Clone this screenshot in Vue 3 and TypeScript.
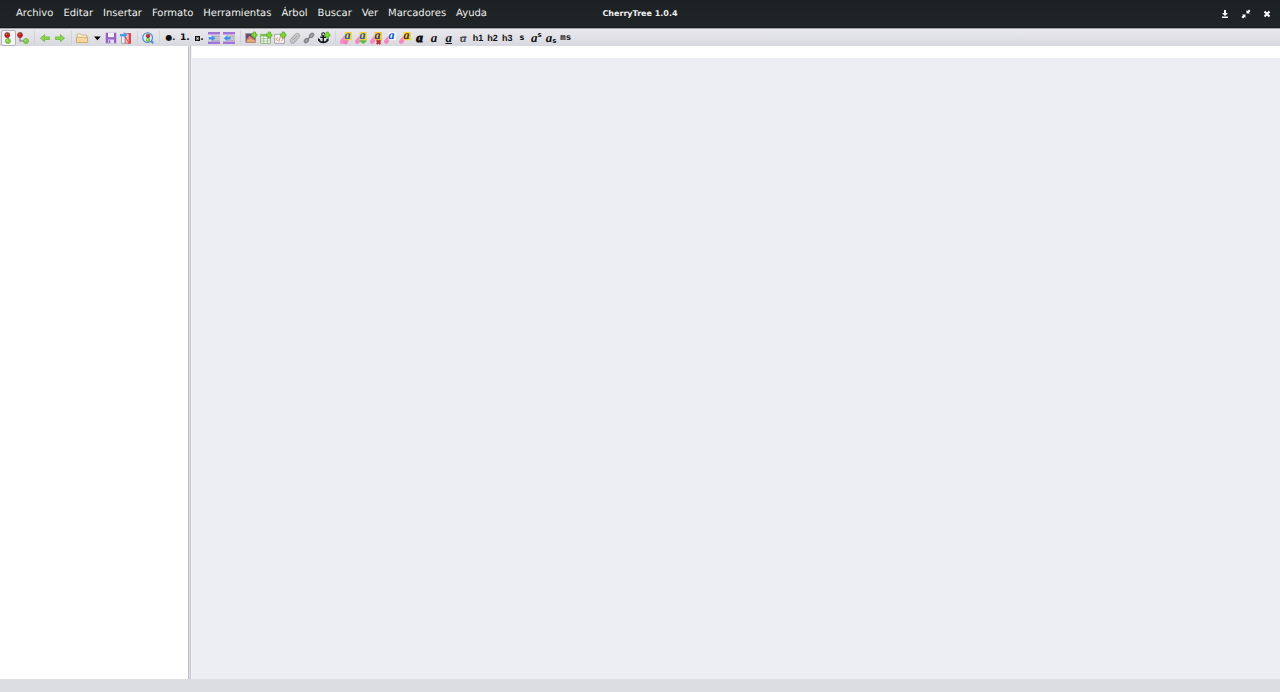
<script setup lang="ts">
interface Tool {
  label: string
  art?: string
  text?: string
  look?: string
  sub?: string
  active?: boolean
}
interface Group {
  name: string
  tools: Tool[]
}

const menus: string[] = ['Archivo', 'Editar', 'Insertar', 'Formato', 'Herramientas', 'Árbol', 'Buscar', 'Ver', 'Marcadores', 'Ayuda']

const plus = '<path d="M11 0h3v2.500h2v3h-2V8h-3V5.500H8.500v-3H11z" fill="#7ddb35" stroke="#4ba51a" stroke-width=".8"/>'
const redCherry = (x: number, y: number, r = 3.4): string =>
  `<circle cx="${x}" cy="${y}" r="${r}" fill="#c91b22" stroke="#8f1519" stroke-width=".7"/><circle cx="${x - 1}" cy="${y - 1}" r="1" fill="#ef6b66"/>`
const greenCherry = (x: number, y: number, r = 3.4): string =>
  `<circle cx="${x}" cy="${y}" r="${r}" fill="#83cf45" stroke="#58a32a" stroke-width=".7"/><circle cx="${x - 1}" cy="${y - 1}" r="1" fill="#b8ec8a"/>`
const indentBars = '<path d="M0 0h16v3.300H0zM0 12.700h16V16H0z" fill="#a374d8"/><path d="M7 4.500h9v2H7zM7 7.300h9v1.700H7zM7 10h9v2H7z" fill="#b3b3bc"/>'
const blob = '<path d="M5 5C8 6 8 9 7 11l-2 4c-2 2-5 1-5-2 0-3 3-4 5-8z" fill="#f58fc4"/><path d="M9 7c3 2 3 5 1 8s-5 1-6-1c0-3 3-4 5-7z" fill="#f07fbc"/>'
const smallBlob = '<path d="M5 6c3 2 3 5 1 8s-6 2-6-1 3-4 5-7z" fill="#f486c0"/>'
const letter = (color: string, back: string): string =>
  `<rect x="6" y="0" width="10" height="11" fill="${back}"/><text x="6" y="9" font-family="Liberation Serif, serif" font-size="16" font-weight="bold" font-style="italic" fill="${color}">a</text>`

const art: Record<string, string> = {
  below: '<path d="M8 4v8" stroke="#777" stroke-width="1.500"/>' + redCherry(7, 4) + '<path d="M6 2l4-1-1 3z" fill="#3f7a28"/>' + greenCherry(8, 12),
  child: '<path d="M4 5v7h8" fill="none" stroke="#777" stroke-width="1.500"/>' + redCherry(4, 4) + '<path d="M3 1l4 0-1 2z" fill="#3f7a28"/>' + greenCherry(12, 12),
  back: '<path d="M7.500 3.500v3H14v3.500H7.500v3L2 8.250z" fill="#8bd44d" stroke="#69b637" stroke-width="1" stroke-linejoin="round"/>',
  next: '<path d="M8.500 3.500v3H2v3.500h6.500v3L14 8.250z" fill="#8bd44d" stroke="#69b637" stroke-width="1" stroke-linejoin="round"/>',
  open: '<path d="M1.500 13V2.500H6L7 4h7.500v9z" fill="#f8f1df" stroke="#c6a368"/><path d="M.5 7h15v7H.5z" fill="#f2d7a1" stroke="#c99f5b"/>',
  down: '<path d="M4 6h9L8.500 11z" fill="#000"/>',
  save: '<path d="M1 1h14v14H1z" fill="#9461c9"/><path d="M4 1h8v6H4z" fill="#f4effa"/><path d="M4 10h8v5H4z" fill="#e7ddf2"/><path d="M5 11h2v4H5z" fill="#9461c9"/>',
  pdf: '<path d="M2 4h5v11H2z" fill="#eeeef3" stroke="#8f9099"/><path d="M7 2h7v13H7z" fill="#f4c5c6" stroke="#b85558"/><path d="M11.500 1.500H14.500V15.500H11.500z" fill="#dd4145"/><path d="M7 6l5 9" stroke="#dd5558" stroke-width="1.500"/><path d="M0 2.500h5V0l5 4-5 4V5.500H0z" fill="#4a9bea"/>',
  find: '<circle cx="7.500" cy="7.500" r="6.500" fill="#d7ebfc" stroke="#4b8bd4" stroke-width="1.600"/><path d="M12 12l3 3" stroke="#4b8bd4" stroke-width="2.500"/><path d="M8 4v7" stroke="#444"/>' + redCherry(8, 5, 2.5) + greenCherry(8, 10.5, 2.5),
  indent: indentBars + '<path d="M1 6.700h4V4l5 4.300-5 4.200V10H1z" fill="#4592e6"/>',
  outdent: indentBars + '<path d="M10 6.700H6V4L1 8.300l5 4.200V10h4z" fill="#4592e6"/>',
  image: '<rect x="1" y="2" width="13" height="12" fill="#65476d" stroke="#9a979e"/><path d="M2 10l4-5 8 6v3H2z" fill="#d88074"/><path d="M2 12l5-3 7 3v1H2z" fill="#e7b27a"/>' + plus,
  table: '<rect x="1" y="3" width="13" height="12" fill="#fff" stroke="#71a65a"/><path d="M1 3h13v3H1z" fill="#77bd51"/><path d="M1 9h13M1 12h13M5 6v9M10 6v9" stroke="#8caf7d"/>' + plus,
  code: '<rect x="1" y="3" width="13" height="12" fill="#f7f4f4" stroke="#8f8f97"/><path d="M5 7L3 9.500 5 12M10 7l2 2.500L10 12M8.500 6l-2 7" fill="none" stroke="#e88865" stroke-width="1.300"/>' + plus,
  clip: '<path d="M3 9l6-6c3-3 7 1 4 4l-6 7c-3 3-7-1-4-5z" fill="#c9c9cc" stroke="#b0b0b4" stroke-width="1.600"/><path d="M5 11l6-6" stroke="#a0a0a4" stroke-width="1.300"/>',
  link: '<path d="M5 11l6-6" stroke="#777" stroke-width="2"/><rect x="-3" y="-2" width="6" height="4" rx="2" transform="translate(4.500 11.500) rotate(-45)" fill="#aaa" stroke="#858589" stroke-width="2"/><rect x="-3" y="-2" width="6" height="4" rx="2" transform="translate(11.500 4.500) rotate(-45)" fill="#aaa" stroke="#858589" stroke-width="2"/>',
  anchor: '<circle cx="7" cy="3" r="2" fill="none" stroke="#151a20" stroke-width="1.500"/><path d="M7 5v10M3 7h8M1 10c1 5 11 5 12 0" fill="none" stroke="#151a20" stroke-width="2"/><path d="M0 12V8l4 3zM14 12V8l-4 3z" fill="#151a20"/>' + plus,
  format: blob + letter('#2455b2', '#fbd442'),
  formatLatest: smallBlob + letter('#2455b2', '#fbd442') + '<path d="M7 11h7l2 1-5 4-5-4z" fill="#61b83a"/>',
  formatRemove: smallBlob + letter('#353a70', '#fbc63e') + '<path d="M9 11l5 5M14 11l-5 5" stroke="#c52f3c" stroke-width="3"/>',
  colorFront: smallBlob + letter('#1652bd', '#f5f9ff'),
  colorBack: smallBlob + letter('#333236', '#ffd43a'),
}

const groups: Group[] = [
  { name: 'nodes', tools: [{ label: 'Añadir nodo', art: 'below', active: true }, { label: 'Añadir subnodo', art: 'child' }] },
  { name: 'history', tools: [{ label: 'Retroceder', art: 'back' }, { label: 'Avanzar', art: 'next' }] },
  {
    name: 'files',
    tools: [{ label: 'Abrir', art: 'open' }, { label: 'Documentos recientes', art: 'down' }, { label: 'Guardar', art: 'save' }, { label: 'Exportar a PDF', art: 'pdf' }],
  },
  { name: 'search', tools: [{ label: 'Buscar en los nodos', art: 'find' }] },
  {
    name: 'lists',
    tools: [
      { label: 'Lista con viñetas', text: '●.', look: 'bullet' },
      { label: 'Lista numerada', text: '1.', look: 'number' },
      { label: 'Lista de tareas', text: '.', look: 'todo' },
      { label: 'Aumentar sangría', art: 'indent' },
      { label: 'Reducir sangría', art: 'outdent' },
    ],
  },
  {
    name: 'insert',
    tools: [
      { label: 'Insertar imagen', art: 'image' },
      { label: 'Insertar tabla', art: 'table' },
      { label: 'Insertar código', art: 'code' },
      { label: 'Insertar archivo', art: 'clip' },
      { label: 'Insertar enlace', art: 'link' },
      { label: 'Insertar ancla', art: 'anchor' },
    ],
  },
  {
    name: 'format',
    tools: [
      { label: 'Copiar formato', art: 'format' },
      { label: 'Último formato', art: 'formatLatest' },
      { label: 'Quitar formato', art: 'formatRemove' },
      { label: 'Color del texto', art: 'colorFront' },
      { label: 'Color de fondo', art: 'colorBack' },
      { label: 'Negrita', text: 'a', look: 'serif heavy' },
      { label: 'Cursiva', text: 'a', look: 'serif' },
      { label: 'Subrayado', text: 'a', look: 'serif under' },
      { label: 'Tachado', text: 'a', look: 'serif strike' },
      { label: 'Título 1', text: 'h1', look: 'heading' },
      { label: 'Título 2', text: 'h2', look: 'heading' },
      { label: 'Título 3', text: 'h3', look: 'heading' },
      { label: 'Pequeño', text: 's', look: 'small' },
      { label: 'Superíndice', text: 'a', look: 'serif', sub: 'raised' },
      { label: 'Subíndice', text: 'a', look: 'serif', sub: 'lowered' },
      { label: 'Monoespaciado', text: 'ms', look: 'mono' },
    ],
  },
]
</script>

<template>
  <div class="window">
    <header class="titlebar">
      <nav class="menus" aria-label="Menú">
        <button v-for="menu in menus" :key="menu" class="menu" type="button">{{ menu }}</button>
      </nav>
      <h1 class="title">CherryTree 1.0.4</h1>
      <div class="controls">
        <button type="button" aria-label="Minimizar">
          <svg viewBox="0 0 10 10"><path d="M4 1h2v3h2L5 7 2 4h2zM2 7.500h6V9H2z" /></svg>
        </button>
        <button type="button" aria-label="Restaurar">
          <svg viewBox="0 0 10 10"><path d="M5.500 1L6.500 2 8 .5 9.500 2 8 3.500 9 4.500H5.500zM4.500 9L3.500 8 2 9.500 .5 8 2 6.500 1 5.500H4.500z" /></svg>
        </button>
        <button type="button" aria-label="Cerrar">
          <svg viewBox="0 0 10 10"><path class="cross" d="M2.500 2.500l5 5M7.500 2.500l-5 5" /></svg>
        </button>
      </div>
    </header>

    <div class="toolbar" role="toolbar" aria-label="Herramientas">
      <template v-for="(group, index) in groups" :key="group.name">
        <span v-if="index > 0" class="separator"></span>
        <div class="group" :class="group.name">
          <button v-for="tool in group.tools" :key="tool.label" class="tool" :class="{ active: tool.active }" type="button" :aria-label="tool.label">
            <svg v-if="tool.art" class="icon" viewBox="0 0 16 16" aria-hidden="true" v-html="art[tool.art]"></svg>
            <span v-else class="glyph" :class="tool.look">{{ tool.text }}</span>
            <span v-if="tool.sub" class="script" :class="tool.sub">s</span>
          </button>
        </div>
      </template>
    </div>

    <div class="workspace">
      <aside class="tree" aria-label="Árbol de nodos"></aside>
      <div class="splitter" role="separator" aria-orientation="vertical"></div>
      <main class="editor">
        <div class="node-header"></div>
      </main>
    </div>
    <footer class="status"></footer>
  </div>
</template>

<style>
body {
  margin: 0;
}
</style>

<style scoped>
.window {
  display: flex;
  flex-direction: column;
  height: 100vh;
  overflow: hidden;
  background: #edeef4;
  font-family: "DejaVu Sans", sans-serif;
  text-rendering: geometricPrecision;
}
button {
  margin: 0;
  padding: 0;
  border: 0;
  background: none;
  color: inherit;
  font: inherit;
  text-rendering: inherit;
}
.titlebar {
  display: grid;
  grid-template-columns: 1fr auto 1fr;
  align-items: center;
  box-sizing: border-box;
  height: 28px;
  flex: none;
  padding-top: 1px;
  border-bottom: 1px solid #161a1c;
  background: linear-gradient(#1c2022, #202628);
  color: #eeeeec;
}
.menus {
  display: flex;
  gap: 10px;
  padding-left: 16px;
}
.menu {
  font-size: 10px;
  line-height: 16px;
  white-space: nowrap;
}
.title {
  margin: 0;
  font-size: 8px;
  line-height: 16px;
  font-weight: bold;
}
.controls {
  display: flex;
  justify-content: flex-end;
  gap: 11px;
  padding-right: 8px;
}
.controls svg {
  display: block;
  width: 10px;
  height: 10px;
  fill: #fff;
}
.cross {
  stroke: #fff;
  stroke-width: 2;
}
.toolbar {
  display: flex;
  box-sizing: border-box;
  height: 18px;
  flex: none;
  padding: 1px 0 0 1px;
  border-top: 1px solid #a4a5a8;
  background: linear-gradient(#e9e9ed, #d8d9df);
  color: #111;
}
.group {
  display: flex;
  width: 29px;
}
.files {
  width: 58px;
}
.search {
  width: 14px;
}
.lists {
  width: 73px;
}
.insert {
  width: 87px;
}
.format {
  width: 234px;
}
.separator {
  width: 1px;
  margin: 1px 3px 1px 4px;
  background: #d2d3d9;
}
.tool {
  display: flex;
  flex: 1 1 0;
  min-width: 0;
  align-items: center;
  justify-content: center;
}
.active {
  border-radius: 2px;
  background: #f3f3f5;
  box-shadow: inset 0 0 0 1px #b3b4ba;
}
.icon {
  width: 12px;
  height: 12px;
  flex: none;
  overflow: visible;
}
.glyph {
  line-height: 12px;
  font-size: 9px;
  font-weight: bold;
}
.bullet {
  font-size: 8px;
}
.heading {
  font-family: "Liberation Sans", Arial, sans-serif;
}
.todo {
  display: flex;
  align-items: center;
}
.todo::before {
  content: "";
  width: 3px;
  height: 3px;
  border: 1px solid #111;
  box-shadow: inset 0 0 0 1px #77777c;
}
.serif {
  font-family: "Liberation Serif", serif;
  font-size: 13px;
  font-style: italic;
}
.heavy {
  -webkit-text-stroke: 1px #111;
}
.under {
  text-decoration: underline;
}
.strike {
  color: #55565a;
  text-decoration: line-through;
}
.small {
  font-size: 8px;
}
.mono {
  font-family: "Liberation Mono", monospace;
}
.script {
  font-size: 7px;
  line-height: 10px;
  font-weight: bold;
}
.raised {
  align-self: flex-start;
}
.lowered {
  align-self: flex-end;
}
.workspace {
  display: flex;
  flex: 1;
  min-height: 0;
}
.tree {
  flex: 0 0 188px;
  background: #fff;
}
.splitter {
  box-sizing: border-box;
  flex: 0 0 4px;
  border-right: 1px solid #f5f5f8;
  background: linear-gradient(90deg, #c0c1cb 1px, #dedfe6 1px 2px, #c4c5ce 2px);
}
.editor {
  flex: 1;
  background: #edeef4;
}
.node-header {
  height: 12px;
  background: #fff;
}
.status {
  height: 13px;
  flex: none;
  background: #dcdde2;
}
</style>
